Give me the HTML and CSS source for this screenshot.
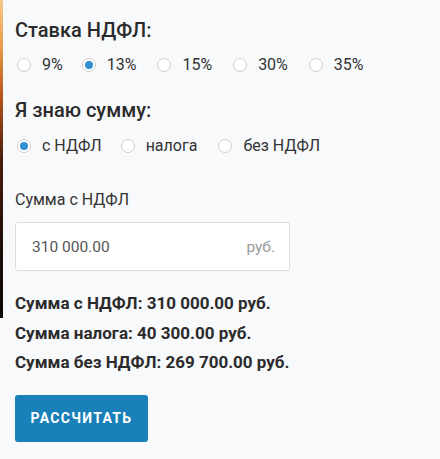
FILE: index.html
```html
<!DOCTYPE html>
<html lang="ru">
  <head>
    <meta charset="UTF-8" />
    <meta name="viewport" content="width=device-width, initial-scale=1.0" />
    <title>Калькулятор НДФЛ</title>
    <link rel="stylesheet" href="styles.css">
  </head>
  <body>
    <div class="edge"></div>

    <div class="calc">
      <h2 class="calc-title">Ставка НДФЛ:</h2>
      <div class="radio-row">
        <label class="radio"><span class="dot"></span>9%</label>
        <label class="radio checked"><span class="dot"></span>13%</label>
        <label class="radio"><span class="dot"></span>15%</label>
        <label class="radio"><span class="dot"></span>30%</label>
        <label class="radio"><span class="dot"></span>35%</label>
      </div>

      <h2 class="calc-title second">Я знаю сумму:</h2>
      <div class="radio-row second">
        <label class="radio checked"><span class="dot"></span>с НДФЛ</label>
        <label class="radio"><span class="dot"></span>налога</label>
        <label class="radio"><span class="dot"></span>без НДФЛ</label>
      </div>

      <p class="field-label">Сумма с НДФЛ</p>
      <div class="field">
        <span class="field-value">310 000.00</span>
        <span class="field-unit">руб.</span>
      </div>

      <div class="results">
        <p>Сумма с НДФЛ: 310 000.00 руб.</p>
        <p>Сумма налога: 40 300.00 руб.</p>
        <p>Сумма без НДФЛ: 269 700.00 руб.</p>
      </div>

      <button class="calc-btn">Рассчитать</button>
    </div>
  </body>
</html>
```

FILE: styles.css
```css
* {
  padding: 0;
  margin: 0;
  box-sizing: border-box;
}

body {
  font-family: Roboto, "Liberation Sans", Arial, sans-serif;
  background-color: #f8f9fb;
  color: #2b2b2b;
  display: flex;
  align-items: flex-start;
  min-height: 459px;
}

.edge {
  width: 3px;
  height: 318px;
  background: linear-gradient(#f6c98a 0%, #e79a45 15%, #b8561c 30%, #4a1c0c 50%, #1b0d08 80%, #0c0806 100%);
}

.calc {
  padding: 18px 0 0 12px;
}

.calc-title {
  font-size: 20px;
  font-weight: 500;
  line-height: 24px;
}

.calc-title.second {
  margin-top: 22px;
}

.radio-row {
  display: flex;
  margin-top: 12px;
  font-size: 16px;
  line-height: 22px;
  color: #333;
}

.radio-row.second {
  margin-top: 13px;
}

.radio {
  display: flex;
  align-items: center;
  margin-right: 19px;
}

.radio:first-child {
  margin-right: 17px;
}

.dot {
  width: 14px;
  height: 14px;
  margin: 0 11px 0 2px;
  border: 1px solid #cfcfcf;
  border-radius: 50%;
  background-color: #fff;
  display: flex;
  align-items: center;
  justify-content: center;
}

.checked .dot::after {
  content: "";
  width: 8px;
  height: 8px;
  border-radius: 50%;
  background-color: #2f8fd1;
}

.field-label {
  margin-top: 33px;
  font-size: 16px;
  line-height: 20px;
  color: #333;
}

.field {
  margin-top: 12px;
  width: 275px;
  height: 49px;
  padding: 0 14px 0 16px;
  display: flex;
  align-items: center;
  justify-content: space-between;
  background-color: #fff;
  border: 1px solid #dcdcdc;
  border-radius: 3px;
  font-size: 15.5px;
}

.field-value {
  color: #555;
}

.field-unit {
  color: #999;
}

.results {
  margin-top: 18px;
  font-size: 17px;
  font-weight: 700;
  line-height: 29.5px;
}

.calc-btn {
  margin-top: 17px;
  width: 133px;
  height: 47px;
  border: none;
  border-radius: 3px;
  background-color: #1a80b9;
  color: #fff;
  font-family: inherit;
  font-size: 14px;
  font-weight: 700;
  letter-spacing: 1.3px;
  text-transform: uppercase;
}
```
